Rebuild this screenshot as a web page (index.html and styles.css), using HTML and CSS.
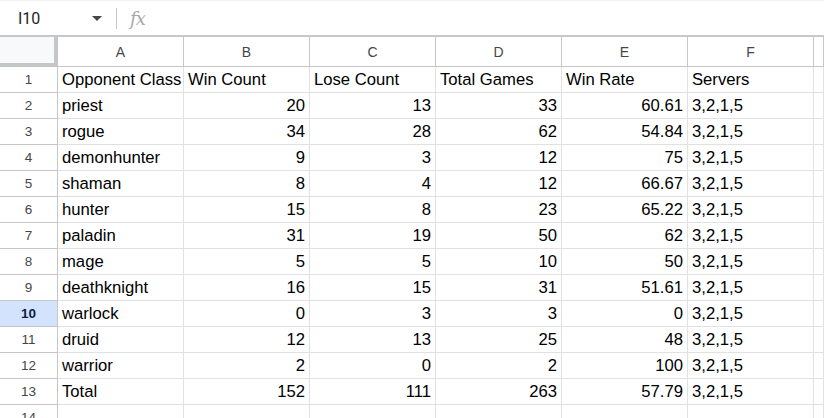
FILE: index.html
```html
<!DOCTYPE html>
<html>
<head>
<meta charset="utf-8">
<link rel="stylesheet" href="styles.css">
</head>
<body>
<div class="formula-bar">
  <div class="name-box">
    <span class="name-text">I10</span>
    <span class="caret"></span>
  </div>
  <div class="sep"></div>
  <div class="fx">fx</div>
</div>
<div class="sheet">
  <div class="corner"></div>
  <div class="colh">A</div><div class="colh">B</div><div class="colh">C</div><div class="colh">D</div><div class="colh">E</div><div class="colh">F</div><div class="colh last"></div>

  <div class="rowh">1</div><div class="cell">Opponent Class</div><div class="cell">Win Count</div><div class="cell">Lose Count</div><div class="cell">Total Games</div><div class="cell">Win Rate</div><div class="cell">Servers</div><div class="cell"></div>
  <div class="rowh">2</div><div class="cell">priest</div><div class="cell num">20</div><div class="cell num">13</div><div class="cell num">33</div><div class="cell num">60.61</div><div class="cell">3,2,1,5</div><div class="cell"></div>
  <div class="rowh">3</div><div class="cell">rogue</div><div class="cell num">34</div><div class="cell num">28</div><div class="cell num">62</div><div class="cell num">54.84</div><div class="cell">3,2,1,5</div><div class="cell"></div>
  <div class="rowh">4</div><div class="cell">demonhunter</div><div class="cell num">9</div><div class="cell num">3</div><div class="cell num">12</div><div class="cell num">75</div><div class="cell">3,2,1,5</div><div class="cell"></div>
  <div class="rowh">5</div><div class="cell">shaman</div><div class="cell num">8</div><div class="cell num">4</div><div class="cell num">12</div><div class="cell num">66.67</div><div class="cell">3,2,1,5</div><div class="cell"></div>
  <div class="rowh">6</div><div class="cell">hunter</div><div class="cell num">15</div><div class="cell num">8</div><div class="cell num">23</div><div class="cell num">65.22</div><div class="cell">3,2,1,5</div><div class="cell"></div>
  <div class="rowh">7</div><div class="cell">paladin</div><div class="cell num">31</div><div class="cell num">19</div><div class="cell num">50</div><div class="cell num">62</div><div class="cell">3,2,1,5</div><div class="cell"></div>
  <div class="rowh">8</div><div class="cell">mage</div><div class="cell num">5</div><div class="cell num">5</div><div class="cell num">10</div><div class="cell num">50</div><div class="cell">3,2,1,5</div><div class="cell"></div>
  <div class="rowh">9</div><div class="cell">deathknight</div><div class="cell num">16</div><div class="cell num">15</div><div class="cell num">31</div><div class="cell num">51.61</div><div class="cell">3,2,1,5</div><div class="cell"></div>
  <div class="rowh selected">10</div><div class="cell">warlock</div><div class="cell num">0</div><div class="cell num">3</div><div class="cell num">3</div><div class="cell num">0</div><div class="cell">3,2,1,5</div><div class="cell"></div>
  <div class="rowh">11</div><div class="cell">druid</div><div class="cell num">12</div><div class="cell num">13</div><div class="cell num">25</div><div class="cell num">48</div><div class="cell">3,2,1,5</div><div class="cell"></div>
  <div class="rowh">12</div><div class="cell">warrior</div><div class="cell num">2</div><div class="cell num">0</div><div class="cell num">2</div><div class="cell num">100</div><div class="cell">3,2,1,5</div><div class="cell"></div>
  <div class="rowh">13</div><div class="cell">Total</div><div class="cell num">152</div><div class="cell num">111</div><div class="cell num">263</div><div class="cell num">57.79</div><div class="cell">3,2,1,5</div><div class="cell"></div>
  <div class="rowh">14</div><div class="cell"></div><div class="cell"></div><div class="cell"></div><div class="cell"></div><div class="cell"></div><div class="cell"></div><div class="cell"></div>
</div>
</body>
</html>
```
FILE: styles.css
```css
* { box-sizing: border-box; }
html, body {
  margin: 0;
  padding: 0;
  background: #ffffff;
  width: 824px;
  height: 418px;
  overflow: hidden;
}
body {
  font-family: "Liberation Sans", Arial, sans-serif;
  color: #000;
}
.formula-bar {
  height: 37px;
  display: flex;
  align-items: center;
  border-top: 1px solid #f1f1f1;
  border-bottom: 2px solid #c7c7c7;
}
.name-box {
  width: 116px;
  display: flex;
  align-items: center;
  padding-left: 18px;
  padding-right: 14px;
}
.name-text {
  font-family: Roboto, "Liberation Sans", sans-serif;
  font-size: 16px;
  color: #1f1f1f;
  flex: 1;
}
.caret {
  width: 0;
  height: 0;
  border-left: 5px solid transparent;
  border-right: 5px solid transparent;
  border-top: 5px solid #444746;
}
.sep {
  width: 1px;
  height: 21px;
  background: #c7c7c7;
}
.fx {
  font-family: "DejaVu Serif", "Liberation Serif", serif;
  font-style: italic;
  font-size: 18px;
  color: #a8a8a8;
  padding-left: 13px;
  letter-spacing: -1px;
}
.sheet {
  display: grid;
  grid-template-columns: 58px repeat(6, 126px) 1fr;
  grid-template-rows: 30px repeat(14, 26px);
}
.corner {
  background: #f8f9fa;
  border-right: 4px solid #c4c7c5;
  border-bottom: 4px solid #c4c7c5;
}
.colh {
  display: flex;
  align-items: center;
  justify-content: center;
  font-size: 14px;
  color: #444746;
  border-right: 1px solid #c4c7c5;
  border-bottom: 1px solid #c4c7c5;
  padding-top: 1px;
}
.rowh {
  display: flex;
  align-items: center;
  justify-content: center;
  font-size: 13.5px;
  color: #444746;
  border-right: 1px solid #c4c7c5;
  border-bottom: 1px solid #c4c7c5;
}
.rowh.selected {
  background: #d3e3fd;
  color: #0b1f47;
  font-weight: bold;
}
.cell {
  display: flex;
  align-items: flex-end;
  font-size: 16.67px;
  line-height: 19px;
  padding: 0 4px 3px 4px;
  border-right: 1px solid #e1e1e1;
  border-bottom: 1px solid #e1e1e1;
  white-space: nowrap;
  color: #000;
}
.cell.num {
  justify-content: flex-end;
}
```
